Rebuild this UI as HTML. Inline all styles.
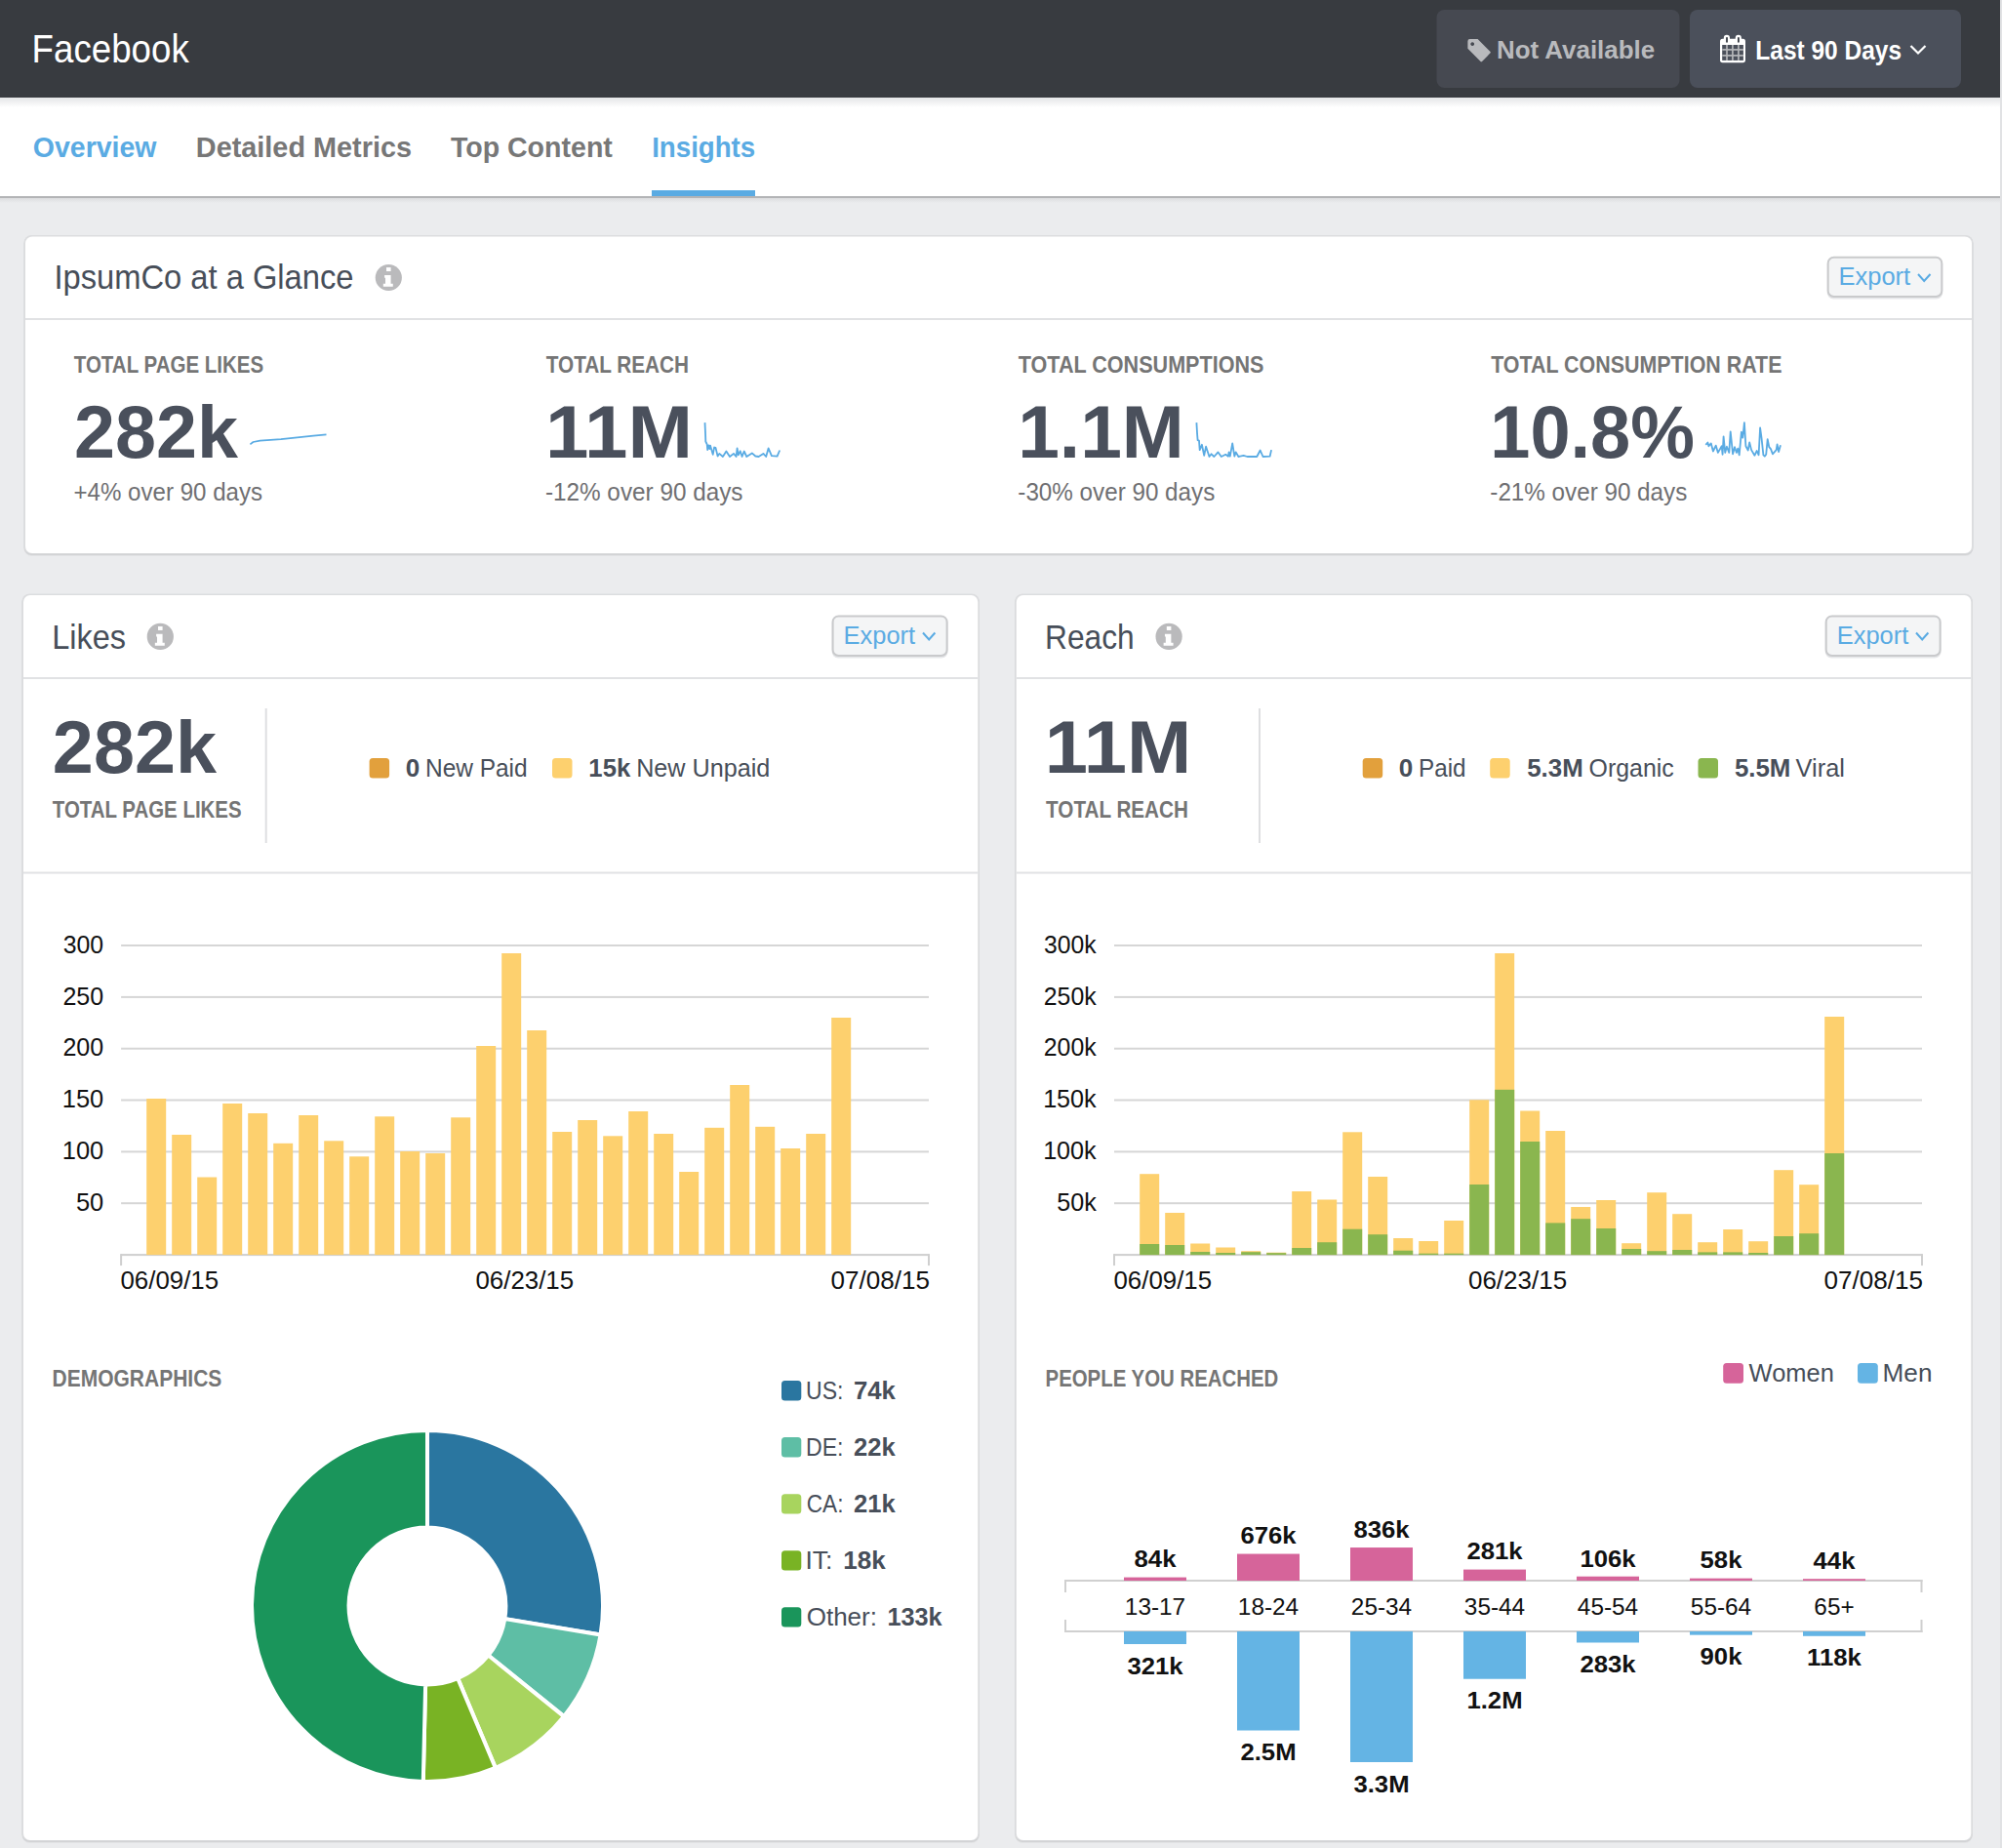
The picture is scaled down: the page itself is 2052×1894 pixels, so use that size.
<!DOCTYPE html>
<html><head><meta charset="utf-8"><title>Facebook Insights</title>
<style>
html,body{margin:0;padding:0;background:#ebecee;}
body{width:2052px;height:1894px;overflow:hidden;position:relative;font-family:"Liberation Sans",sans-serif;}
svg{position:absolute;left:0;top:0;}
text{font-family:"Liberation Sans",sans-serif;}
</style></head><body>
<svg width="2052" height="1894" viewBox="0 0 2052 1894">
<defs>
<linearGradient id="hdrshadow" x1="0" y1="0" x2="0" y2="1"><stop offset="0" stop-color="#e4e5e7"/><stop offset="1" stop-color="#ffffff"/></linearGradient>
<linearGradient id="tabshadow" x1="0" y1="0" x2="0" y2="1"><stop offset="0" stop-color="#dcdddf"/><stop offset="1" stop-color="#ebecee"/></linearGradient>
</defs>
<rect x="0" y="0" width="2050" height="100" fill="#383b40"/>
<rect x="2050" y="0" width="2" height="1894" fill="#e1e2e4"/>
<rect x="0" y="100" width="2050" height="101" fill="#ffffff"/>
<rect x="0" y="100" width="2050" height="10" fill="url(#hdrshadow)"/>
<rect x="0" y="201" width="2050" height="2" fill="#b3b4b6"/>
<rect x="0" y="203" width="2050" height="5" fill="url(#tabshadow)"/>
<rect x="668" y="195" width="106" height="6" fill="#5aabe3"/>
<rect x="1472.5" y="10" width="249" height="80" rx="8" fill="#464951"/>
<rect x="1732" y="10" width="278" height="80" rx="8" fill="#4b505b"/>
<rect x="24.5" y="242.5" width="1998.0" height="327.5" rx="8" fill="#e2e3e5"/>
<rect x="24.5" y="241.5" width="1998.0" height="327.5" rx="8" fill="#d2d3d5"/>
<rect x="24.5" y="241.0" width="1998.0" height="326.5" rx="8" fill="#dcdddf"/>
<rect x="26.0" y="242.5" width="1995.0" height="324.5" rx="7" fill="#ffffff"/>
<rect x="26" y="326" width="1995" height="2" fill="#e1e2e4"/>
<rect x="22.5" y="610.0" width="981.3" height="1279.0" rx="8" fill="#e2e3e5"/>
<rect x="22.5" y="609.0" width="981.3" height="1279.0" rx="8" fill="#d2d3d5"/>
<rect x="22.5" y="608.5" width="981.3" height="1278.0" rx="8" fill="#dcdddf"/>
<rect x="24.0" y="610.0" width="978.3" height="1276.0" rx="7" fill="#ffffff"/>
<rect x="1040.3" y="610.0" width="981.5" height="1279.0" rx="8" fill="#e2e3e5"/>
<rect x="1040.3" y="609.0" width="981.5" height="1279.0" rx="8" fill="#d2d3d5"/>
<rect x="1040.3" y="608.5" width="981.5" height="1278.0" rx="8" fill="#dcdddf"/>
<rect x="1041.8" y="610.0" width="978.5" height="1276.0" rx="7" fill="#ffffff"/>
<rect x="24.0" y="694" width="978.3" height="2" fill="#e1e2e4"/>
<rect x="24.0" y="893.5" width="978.3" height="2" fill="#e1e2e4"/>
<rect x="1042.0" y="694" width="978.3" height="2" fill="#e1e2e4"/>
<rect x="1042.0" y="893.5" width="978.3" height="2" fill="#e1e2e4"/>
<rect x="271.7" y="726" width="2" height="138" fill="#dedfe1"/>
<rect x="1290" y="726" width="2" height="138" fill="#dedfe1"/>
<rect x="1872.7" y="264.2" width="118.6" height="42.3" rx="6.5" fill="#e6e7e9"/>
<rect x="1873.7" y="263.7" width="116.6" height="40.3" rx="6" fill="#f4f5f6" stroke="#c9cacc" stroke-width="2"/>
<polyline points="1966.0,281.0 1972.2,288.0 1978.5,281.0" fill="none" stroke="#5aabe3" stroke-width="2"/>
<rect x="852.6" y="631.9" width="119.0" height="42.6" rx="6.5" fill="#e6e7e9"/>
<rect x="853.6" y="631.4" width="117.0" height="40.6" rx="6" fill="#f4f5f6" stroke="#c9cacc" stroke-width="2"/>
<polyline points="946.0,648.5 952.2,655.5 958.4,648.5" fill="none" stroke="#5aabe3" stroke-width="2"/>
<rect x="1870.7" y="631.9" width="118.9" height="42.6" rx="6.5" fill="#e6e7e9"/>
<rect x="1871.7" y="631.4" width="116.9" height="40.6" rx="6" fill="#f4f5f6" stroke="#c9cacc" stroke-width="2"/>
<polyline points="1964.0,648.5 1970.2,655.5 1976.4,648.5" fill="none" stroke="#5aabe3" stroke-width="2"/>
<circle cx="398.3" cy="284.5" r="13.6" fill="#bababc"/>
<rect x="396.02" y="274.08" width="4.57" height="3.97" fill="#fff"/>
<path d="M394.13 281.92 h6.45 v8.93 h2.18 v2.98 h-9.93 v-2.98 h2.18 v-6.15 h-0.89 z" fill="#fff"/>
<circle cx="164.3" cy="652.4" r="13.6" fill="#bababc"/>
<rect x="162.02" y="641.98" width="4.57" height="3.97" fill="#fff"/>
<path d="M160.13 649.82 h6.45 v8.93 h2.18 v2.98 h-9.93 v-2.98 h2.18 v-6.15 h-0.89 z" fill="#fff"/>
<circle cx="1198.1" cy="652.4" r="13.6" fill="#bababc"/>
<rect x="1195.82" y="641.98" width="4.57" height="3.97" fill="#fff"/>
<path d="M1193.93 649.82 h6.45 v8.93 h2.18 v2.98 h-9.93 v-2.98 h2.18 v-6.15 h-0.89 z" fill="#fff"/>
<polyline points="256.4,455.4 259.5,453.0 266.6,451.6 288.0,450.2 307.0,448.1 321.2,446.6 334.5,445.4" fill="none" stroke="#5aabe3" stroke-width="1.7" stroke-linejoin="round"/>
<polyline points="722.5,433.1 723.1,446.4 723.3,452.5 724.7,455.4 725.2,461.1 726.4,456.3 727.3,460.1 728.0,456.6 730.7,465.8 732.1,458.5 733.5,458.9 735.6,467.5 737.3,464.9 740.9,468.0 744.4,462.5 748.0,468.0 752.0,464.9 754.6,468.0 755.6,459.4 756.8,466.3 758.7,462.3 760.6,468.0 762.7,462.5 765.3,468.0 770.8,464.4 774.3,467.5 777.6,468.0 782.4,464.9 785.2,468.0 787.6,459.4 790.9,467.2 796.6,467.7 799.2,461.5" fill="none" stroke="#5aabe3" stroke-width="1.8" stroke-linejoin="round"/>
<polyline points="1226.4,433.1 1227.1,444.9 1227.6,451.1 1229.0,451.6 1229.7,461.1 1231.9,455.8 1234.2,466.8 1236.1,457.7 1239.5,468.0 1241.6,465.3 1244.4,468.0 1248.5,463.4 1251.8,468.0 1256.3,465.8 1258.9,467.7 1259.6,463.4 1260.8,467.7 1263.2,454.4 1265.3,467.7 1266.7,463.4 1269.4,468.0 1274.6,466.8 1278.4,468.0 1288.3,468.0 1291.7,461.5 1294.5,468.0 1301.6,467.7 1303.1,461.1" fill="none" stroke="#5aabe3" stroke-width="1.8" stroke-linejoin="round"/>
<polyline points="1748.3,455.8 1750.4,453.5 1751.4,457.3 1753.8,454.4 1755.9,462.5 1758.7,456.6 1760.9,463.9 1764.7,457.3 1765.6,465.8 1766.6,447.3 1768.2,463.9 1769.9,457.7 1772.3,463.9 1773.7,442.3 1776.1,465.3 1778.0,458.2 1779.9,463.9 1781.3,459.6 1782.7,466.3 1784.9,442.6 1786.3,448.7 1787.9,433.1 1789.4,457.3 1791.7,461.5 1793.2,453.5 1795.1,461.1 1798.4,466.8 1800.7,462.0 1802.6,466.3 1804.1,438.3 1805.5,448.7 1807.4,466.3 1808.8,467.7 1810.2,465.8 1811.7,450.2 1813.3,458.2 1815.0,460.1 1816.9,465.3 1820.7,461.1 1821.6,455.4 1823.1,463.0 1825.0,456.3" fill="none" stroke="#5aabe3" stroke-width="1.8" stroke-linejoin="round"/>
<rect x="124.1" y="968.0" width="827.9" height="2" fill="#d6d6d6"/>
<rect x="124.1" y="1020.9" width="827.9" height="2" fill="#d6d6d6"/>
<rect x="124.1" y="1073.7" width="827.9" height="2" fill="#d6d6d6"/>
<rect x="124.1" y="1126.5" width="827.9" height="2" fill="#d6d6d6"/>
<rect x="124.1" y="1179.4" width="827.9" height="2" fill="#d6d6d6"/>
<rect x="124.1" y="1232.2" width="827.9" height="2" fill="#d6d6d6"/>
<rect x="124.1" y="1285.1" width="827.9" height="2" fill="#cfcfcf"/>
<rect x="123.1" y="1285.1" width="2" height="12" fill="#cfcfcf"/>
<rect x="951.0" y="1285.1" width="2" height="12" fill="#cfcfcf"/>
<rect x="1142.0" y="968.0" width="828.0" height="2" fill="#d6d6d6"/>
<rect x="1142.0" y="1020.9" width="828.0" height="2" fill="#d6d6d6"/>
<rect x="1142.0" y="1073.7" width="828.0" height="2" fill="#d6d6d6"/>
<rect x="1142.0" y="1126.5" width="828.0" height="2" fill="#d6d6d6"/>
<rect x="1142.0" y="1179.4" width="828.0" height="2" fill="#d6d6d6"/>
<rect x="1142.0" y="1232.2" width="828.0" height="2" fill="#d6d6d6"/>
<rect x="1142.0" y="1285.1" width="828.0" height="2" fill="#cfcfcf"/>
<rect x="1141.0" y="1285.1" width="2" height="12" fill="#cfcfcf"/>
<rect x="1969.0" y="1285.1" width="2" height="12" fill="#cfcfcf"/>
<rect x="150.2" y="1126.0" width="20" height="160.1" fill="#fdd06e"/>
<rect x="176.2" y="1163.0" width="20" height="123.1" fill="#fdd06e"/>
<rect x="202.2" y="1206.5" width="20" height="79.6" fill="#fdd06e"/>
<rect x="228.2" y="1131.0" width="20" height="155.1" fill="#fdd06e"/>
<rect x="254.2" y="1141.0" width="20" height="145.1" fill="#fdd06e"/>
<rect x="280.2" y="1171.8" width="20" height="114.3" fill="#fdd06e"/>
<rect x="306.2" y="1143.0" width="20" height="143.1" fill="#fdd06e"/>
<rect x="332.2" y="1169.3" width="20" height="116.8" fill="#fdd06e"/>
<rect x="358.2" y="1185.3" width="20" height="100.8" fill="#fdd06e"/>
<rect x="384.2" y="1144.3" width="20" height="141.8" fill="#fdd06e"/>
<rect x="410.2" y="1180.0" width="20" height="106.1" fill="#fdd06e"/>
<rect x="436.2" y="1182.0" width="20" height="104.1" fill="#fdd06e"/>
<rect x="462.2" y="1145.3" width="20" height="140.8" fill="#fdd06e"/>
<rect x="488.2" y="1072.0" width="20" height="214.1" fill="#fdd06e"/>
<rect x="514.2" y="977.0" width="20" height="309.1" fill="#fdd06e"/>
<rect x="540.2" y="1056.0" width="20" height="230.1" fill="#fdd06e"/>
<rect x="566.2" y="1160.0" width="20" height="126.1" fill="#fdd06e"/>
<rect x="592.2" y="1148.0" width="20" height="138.1" fill="#fdd06e"/>
<rect x="618.2" y="1164.3" width="20" height="121.8" fill="#fdd06e"/>
<rect x="644.2" y="1139.0" width="20" height="147.1" fill="#fdd06e"/>
<rect x="670.2" y="1162.0" width="20" height="124.1" fill="#fdd06e"/>
<rect x="696.2" y="1201.0" width="20" height="85.1" fill="#fdd06e"/>
<rect x="722.2" y="1155.8" width="20" height="130.3" fill="#fdd06e"/>
<rect x="748.2" y="1112.0" width="20" height="174.1" fill="#fdd06e"/>
<rect x="774.2" y="1154.8" width="20" height="131.3" fill="#fdd06e"/>
<rect x="800.2" y="1177.0" width="20" height="109.1" fill="#fdd06e"/>
<rect x="826.2" y="1162.0" width="20" height="124.1" fill="#fdd06e"/>
<rect x="852.2" y="1043.0" width="20" height="243.1" fill="#fdd06e"/>
<rect x="1168.2" y="1203.2" width="20" height="82.9" fill="#fdd06e"/>
<rect x="1168.2" y="1275.0" width="20" height="11.1" fill="#8ab64f"/>
<rect x="1194.2" y="1243.0" width="20" height="43.1" fill="#fdd06e"/>
<rect x="1194.2" y="1276.0" width="20" height="10.1" fill="#8ab64f"/>
<rect x="1220.2" y="1274.5" width="20" height="11.6" fill="#fdd06e"/>
<rect x="1220.2" y="1283.0" width="20" height="3.1" fill="#8ab64f"/>
<rect x="1246.2" y="1278.5" width="20" height="7.6" fill="#fdd06e"/>
<rect x="1246.2" y="1284.0" width="20" height="2.1" fill="#8ab64f"/>
<rect x="1272.2" y="1282.2" width="20" height="3.9" fill="#fdd06e"/>
<rect x="1272.2" y="1283.2" width="20" height="2.9" fill="#8ab64f"/>
<rect x="1298.2" y="1283.7" width="20" height="2.4" fill="#fdd06e"/>
<rect x="1298.2" y="1284.2" width="20" height="1.9" fill="#8ab64f"/>
<rect x="1324.2" y="1221.0" width="20" height="65.1" fill="#fdd06e"/>
<rect x="1324.2" y="1279.0" width="20" height="7.1" fill="#8ab64f"/>
<rect x="1350.2" y="1229.5" width="20" height="56.6" fill="#fdd06e"/>
<rect x="1350.2" y="1273.2" width="20" height="12.9" fill="#8ab64f"/>
<rect x="1376.2" y="1160.3" width="20" height="125.8" fill="#fdd06e"/>
<rect x="1376.2" y="1259.7" width="20" height="26.4" fill="#8ab64f"/>
<rect x="1402.2" y="1206.0" width="20" height="80.1" fill="#fdd06e"/>
<rect x="1402.2" y="1265.2" width="20" height="20.9" fill="#8ab64f"/>
<rect x="1428.2" y="1269.0" width="20" height="17.1" fill="#fdd06e"/>
<rect x="1428.2" y="1281.7" width="20" height="4.4" fill="#8ab64f"/>
<rect x="1454.2" y="1272.0" width="20" height="14.1" fill="#fdd06e"/>
<rect x="1454.2" y="1284.7" width="20" height="1.4" fill="#8ab64f"/>
<rect x="1480.2" y="1251.0" width="20" height="35.1" fill="#fdd06e"/>
<rect x="1480.2" y="1284.7" width="20" height="1.4" fill="#8ab64f"/>
<rect x="1506.2" y="1127.3" width="20" height="158.8" fill="#fdd06e"/>
<rect x="1506.2" y="1214.0" width="20" height="72.1" fill="#8ab64f"/>
<rect x="1532.2" y="977.0" width="20" height="309.1" fill="#fdd06e"/>
<rect x="1532.2" y="1116.8" width="20" height="169.3" fill="#8ab64f"/>
<rect x="1558.2" y="1138.5" width="20" height="147.6" fill="#fdd06e"/>
<rect x="1558.2" y="1170.0" width="20" height="116.1" fill="#8ab64f"/>
<rect x="1584.2" y="1159.0" width="20" height="127.1" fill="#fdd06e"/>
<rect x="1584.2" y="1253.4" width="20" height="32.7" fill="#8ab64f"/>
<rect x="1610.2" y="1237.0" width="20" height="49.1" fill="#fdd06e"/>
<rect x="1610.2" y="1249.2" width="20" height="36.9" fill="#8ab64f"/>
<rect x="1636.2" y="1230.0" width="20" height="56.1" fill="#fdd06e"/>
<rect x="1636.2" y="1259.0" width="20" height="27.1" fill="#8ab64f"/>
<rect x="1662.2" y="1274.2" width="20" height="11.9" fill="#fdd06e"/>
<rect x="1662.2" y="1280.0" width="20" height="6.1" fill="#8ab64f"/>
<rect x="1688.2" y="1222.2" width="20" height="63.9" fill="#fdd06e"/>
<rect x="1688.2" y="1282.2" width="20" height="3.9" fill="#8ab64f"/>
<rect x="1714.2" y="1244.2" width="20" height="41.9" fill="#fdd06e"/>
<rect x="1714.2" y="1281.0" width="20" height="5.1" fill="#8ab64f"/>
<rect x="1740.2" y="1273.2" width="20" height="12.9" fill="#fdd06e"/>
<rect x="1740.2" y="1283.4" width="20" height="2.7" fill="#8ab64f"/>
<rect x="1766.2" y="1260.0" width="20" height="26.1" fill="#fdd06e"/>
<rect x="1766.2" y="1283.4" width="20" height="2.7" fill="#8ab64f"/>
<rect x="1792.2" y="1272.2" width="20" height="13.9" fill="#fdd06e"/>
<rect x="1792.2" y="1284.0" width="20" height="2.1" fill="#8ab64f"/>
<rect x="1818.2" y="1199.2" width="20" height="86.9" fill="#fdd06e"/>
<rect x="1818.2" y="1267.0" width="20" height="19.1" fill="#8ab64f"/>
<rect x="1844.2" y="1214.2" width="20" height="71.9" fill="#fdd06e"/>
<rect x="1844.2" y="1264.2" width="20" height="21.9" fill="#8ab64f"/>
<rect x="1870.2" y="1042.0" width="20" height="244.1" fill="#fdd06e"/>
<rect x="1870.2" y="1182.0" width="20" height="104.1" fill="#8ab64f"/>
<rect x="378.6" y="777.0" width="20.5" height="20.5" rx="3.5" fill="#e2a03c"/>
<rect x="566.0" y="777.0" width="20.5" height="20.5" rx="3.5" fill="#fdd06e"/>
<rect x="1396.7" y="777.0" width="20.5" height="20.5" rx="3.5" fill="#e2a03c"/>
<rect x="1527.2" y="777.0" width="20.5" height="20.5" rx="3.5" fill="#fdd06e"/>
<rect x="1740.5" y="777.0" width="20.5" height="20.5" rx="3.5" fill="#8ab64f"/>
<rect x="801.0" y="1415.1" width="20.3" height="20.3" rx="3.5" fill="#2a76a0"/>
<rect x="801.0" y="1473.1" width="20.3" height="20.3" rx="3.5" fill="#5ebea5"/>
<rect x="801.0" y="1531.2" width="20.3" height="20.3" rx="3.5" fill="#a8d45e"/>
<rect x="801.0" y="1589.2" width="20.3" height="20.3" rx="3.5" fill="#79b324"/>
<rect x="801.0" y="1647.3" width="20.3" height="20.3" rx="3.5" fill="#1a955b"/>
<path d="M438.00 1466.00 A180.0 180.0 0 0 1 615.58 1675.41 L517.32 1659.14 A80.4 80.4 0 0 0 438.00 1565.60 Z" fill="#2a76a0" stroke="#fff" stroke-width="4" stroke-linejoin="miter"/>
<path d="M615.58 1675.41 A180.0 180.0 0 0 1 577.97 1759.17 L500.52 1696.55 A80.4 80.4 0 0 0 517.32 1659.14 Z" fill="#5ebea5" stroke="#fff" stroke-width="4" stroke-linejoin="miter"/>
<path d="M577.97 1759.17 A180.0 180.0 0 0 1 507.86 1811.89 L469.20 1720.10 A80.4 80.4 0 0 0 500.52 1696.55 Z" fill="#a8d45e" stroke="#fff" stroke-width="4" stroke-linejoin="miter"/>
<path d="M507.86 1811.89 A180.0 180.0 0 0 1 433.78 1825.95 L436.12 1726.38 A80.4 80.4 0 0 0 469.20 1720.10 Z" fill="#79b324" stroke="#fff" stroke-width="4" stroke-linejoin="miter"/>
<path d="M433.78 1825.95 A180.0 180.0 0 0 1 438.00 1466.00 L438.00 1565.60 A80.4 80.4 0 0 0 436.12 1726.38 Z" fill="#1a955b" stroke="#fff" stroke-width="4" stroke-linejoin="miter"/>
<rect x="1766.2" y="1397.0" width="20.8" height="20.8" rx="3.5" fill="#d6649a"/>
<rect x="1904.0" y="1397.0" width="20.8" height="20.8" rx="3.5" fill="#64b4e4"/>
<rect x="1091" y="1619" width="879.5" height="2" fill="#d0d0d0"/>
<rect x="1091" y="1671" width="879.5" height="2" fill="#d0d0d0"/>
<rect x="1091.0" y="1619" width="2" height="13" fill="#d0d0d0"/>
<rect x="1091.0" y="1660" width="2" height="13" fill="#d0d0d0"/>
<rect x="1968.5" y="1619" width="2" height="13" fill="#d0d0d0"/>
<rect x="1968.5" y="1660" width="2" height="13" fill="#d0d0d0"/>
<rect x="1152.0" y="1616.59" width="64" height="3.41" fill="#d6649a"/>
<rect x="1152.0" y="1672" width="64" height="13.03" fill="#64b4e4"/>
<rect x="1268.0" y="1592.55" width="64" height="27.45" fill="#d6649a"/>
<rect x="1268.0" y="1672" width="64" height="101.52" fill="#64b4e4"/>
<rect x="1384.0" y="1586.05" width="64" height="33.95" fill="#d6649a"/>
<rect x="1384.0" y="1672" width="64" height="134.00" fill="#64b4e4"/>
<rect x="1500.0" y="1608.59" width="64" height="11.41" fill="#d6649a"/>
<rect x="1500.0" y="1672" width="64" height="48.73" fill="#64b4e4"/>
<rect x="1616.0" y="1615.70" width="64" height="4.30" fill="#d6649a"/>
<rect x="1616.0" y="1672" width="64" height="11.49" fill="#64b4e4"/>
<rect x="1732.0" y="1617.64" width="64" height="2.36" fill="#d6649a"/>
<rect x="1732.0" y="1672" width="64" height="3.65" fill="#64b4e4"/>
<rect x="1848.0" y="1618.20" width="64" height="1.80" fill="#d6649a"/>
<rect x="1848.0" y="1672" width="64" height="4.79" fill="#64b4e4"/>
<path d="M1506.6 40 H1514.6 L1527.3 52.7 Q1528.3 53.6 1527.3 54.6 L1519.3 62.7 Q1518.3 63.7 1517.3 62.7 L1504.4 49.7 V42.2 Q1504.4 40 1506.6 40 Z M1509.2 43.2 a1.9 1.9 0 1 0 0.01 0 z" fill="#b9babd" fill-rule="evenodd"/>
<rect x="1763" y="39.8" width="26" height="24.4" rx="2.6" fill="#ffffff"/>
<rect x="1765.2" y="46" width="21.7" height="15.9" fill="#4b505b"/>
<g fill="#b5b6b9"><rect x="1769.15" y="46" width="1.7" height="15.9"/><rect x="1775.05" y="46" width="1.7" height="15.9"/><rect x="1781.05" y="46" width="1.7" height="15.9"/><rect x="1765.2" y="50.05" width="21.7" height="1.7"/><rect x="1765.2" y="56.05" width="21.7" height="1.7"/></g>
<g fill="#ffffff"><rect x="1766.8" y="35.8" width="6.2" height="8" rx="3.1"/><rect x="1778.7" y="35.8" width="6.2" height="8" rx="3.1"/></g>
<g fill="#343840"><rect x="1769.1" y="37.9" width="1.8" height="5.8" rx="0.9"/><rect x="1781" y="37.9" width="1.8" height="5.8" rx="0.9"/></g>
<polyline points="1958.5,47 1966,54.5 1973.5,47" fill="none" stroke="#fff" stroke-width="2.2"/>
<text x="32.59" y="64.40" font-size="39.83" font-weight="normal" fill="#ffffff" textLength="161.16" lengthAdjust="spacingAndGlyphs">Facebook</text>
<text x="1533.98" y="60.00" font-size="26.02" font-weight="bold" fill="#b9babd" textLength="162.20" lengthAdjust="spacingAndGlyphs">Not Available</text>
<text x="1799.36" y="60.50" font-size="26.89" font-weight="bold" fill="#ffffff" textLength="149.64" lengthAdjust="spacingAndGlyphs">Last 90 Days</text>
<text x="33.83" y="160.80" font-size="29.65" font-weight="bold" fill="#5aabe3" textLength="126.71" lengthAdjust="spacingAndGlyphs">Overview</text>
<text x="200.87" y="160.80" font-size="29.36" font-weight="bold" fill="#777777" textLength="221.11" lengthAdjust="spacingAndGlyphs">Detailed Metrics</text>
<text x="461.88" y="161.00" font-size="29.65" font-weight="bold" fill="#777777" textLength="165.97" lengthAdjust="spacingAndGlyphs">Top Content</text>
<text x="668.15" y="161.00" font-size="29.94" font-weight="bold" fill="#5aabe3" textLength="106.09" lengthAdjust="spacingAndGlyphs">Insights</text>
<text x="55.48" y="296.00" font-size="34.45" font-weight="normal" fill="#474e59" textLength="306.97" lengthAdjust="spacingAndGlyphs">IpsumCo at a Glance</text>
<text x="1884.51" y="292.00" font-size="26.16" font-weight="normal" fill="#5aabe3" textLength="73.68" lengthAdjust="spacingAndGlyphs">Export</text>
<text x="75.77" y="382.40" font-size="23.84" font-weight="bold" fill="#757575" textLength="194.43" lengthAdjust="spacingAndGlyphs">TOTAL PAGE LIKES</text>
<text x="559.77" y="382.40" font-size="23.84" font-weight="bold" fill="#757575" textLength="146.23" lengthAdjust="spacingAndGlyphs">TOTAL REACH</text>
<text x="1043.76" y="382.40" font-size="23.84" font-weight="bold" fill="#757575" textLength="251.68" lengthAdjust="spacingAndGlyphs">TOTAL CONSUMPTIONS</text>
<text x="1528.16" y="382.40" font-size="23.84" font-weight="bold" fill="#757575" textLength="298.28" lengthAdjust="spacingAndGlyphs">TOTAL CONSUMPTION RATE</text>
<text x="76.08" y="469.00" font-size="76.02" font-weight="bold" fill="#4a505c" textLength="167.84" lengthAdjust="spacingAndGlyphs">282k</text>
<text x="558.97" y="469.00" font-size="76.02" font-weight="bold" fill="#4a505c" textLength="150.97" lengthAdjust="spacingAndGlyphs">11M</text>
<text x="1043.17" y="469.00" font-size="76.02" font-weight="bold" fill="#4a505c" textLength="170.56" lengthAdjust="spacingAndGlyphs">1.1M</text>
<text x="1527.34" y="469.00" font-size="76.02" font-weight="bold" fill="#4a505c" textLength="209.61" lengthAdjust="spacingAndGlyphs">10.8%</text>
<text x="75.52" y="513.00" font-size="26.16" font-weight="normal" fill="#6f6f72" textLength="193.55" lengthAdjust="spacingAndGlyphs">+4% over 90 days</text>
<text x="558.92" y="513.00" font-size="26.16" font-weight="normal" fill="#6f6f72" textLength="202.56" lengthAdjust="spacingAndGlyphs">-12% over 90 days</text>
<text x="1043.32" y="513.00" font-size="26.16" font-weight="normal" fill="#6f6f72" textLength="201.95" lengthAdjust="spacingAndGlyphs">-30% over 90 days</text>
<text x="1527.32" y="513.00" font-size="26.16" font-weight="normal" fill="#6f6f72" textLength="201.95" lengthAdjust="spacingAndGlyphs">-21% over 90 days</text>
<text x="53.14" y="664.50" font-size="34.74" font-weight="normal" fill="#474e59" textLength="75.84" lengthAdjust="spacingAndGlyphs">Likes</text>
<text x="864.61" y="659.90" font-size="25.73" font-weight="normal" fill="#5aabe3" textLength="73.57" lengthAdjust="spacingAndGlyphs">Export</text>
<text x="53.88" y="792.00" font-size="75.44" font-weight="bold" fill="#4a505c" textLength="168.05" lengthAdjust="spacingAndGlyphs">282k</text>
<text x="53.77" y="838.00" font-size="23.55" font-weight="bold" fill="#757575" textLength="193.83" lengthAdjust="spacingAndGlyphs">TOTAL PAGE LIKES</text>
<text x="1071.00" y="664.50" font-size="34.74" font-weight="normal" fill="#474e59" textLength="91.66" lengthAdjust="spacingAndGlyphs">Reach</text>
<text x="1882.71" y="659.90" font-size="25.73" font-weight="normal" fill="#5aabe3" textLength="73.57" lengthAdjust="spacingAndGlyphs">Export</text>
<text x="1070.89" y="792.00" font-size="75.44" font-weight="bold" fill="#4a505c" textLength="150.33" lengthAdjust="spacingAndGlyphs">11M</text>
<text x="1072.07" y="838.00" font-size="23.55" font-weight="bold" fill="#757575" textLength="145.82" lengthAdjust="spacingAndGlyphs">TOTAL REACH</text>
<text x="64.75" y="976.70" font-size="26.02" font-weight="normal" fill="#111111" textLength="41.42" lengthAdjust="spacingAndGlyphs">300</text>
<text x="1070.11" y="976.70" font-size="26.02" font-weight="normal" fill="#111111" textLength="53.61" lengthAdjust="spacingAndGlyphs">300k</text>
<text x="64.44" y="1029.55" font-size="26.02" font-weight="normal" fill="#111111" textLength="41.74" lengthAdjust="spacingAndGlyphs">250</text>
<text x="1069.80" y="1029.55" font-size="26.02" font-weight="normal" fill="#111111" textLength="53.91" lengthAdjust="spacingAndGlyphs">250k</text>
<text x="64.44" y="1082.40" font-size="26.02" font-weight="normal" fill="#111111" textLength="41.74" lengthAdjust="spacingAndGlyphs">200</text>
<text x="1069.80" y="1082.40" font-size="26.02" font-weight="normal" fill="#111111" textLength="53.91" lengthAdjust="spacingAndGlyphs">200k</text>
<text x="63.76" y="1135.25" font-size="26.02" font-weight="normal" fill="#111111" textLength="42.43" lengthAdjust="spacingAndGlyphs">150</text>
<text x="1069.13" y="1135.25" font-size="26.02" font-weight="normal" fill="#111111" textLength="54.58" lengthAdjust="spacingAndGlyphs">150k</text>
<text x="63.76" y="1188.10" font-size="26.02" font-weight="normal" fill="#111111" textLength="42.43" lengthAdjust="spacingAndGlyphs">100</text>
<text x="1069.13" y="1188.10" font-size="26.02" font-weight="normal" fill="#111111" textLength="54.58" lengthAdjust="spacingAndGlyphs">100k</text>
<text x="77.88" y="1240.95" font-size="26.02" font-weight="normal" fill="#111111" textLength="28.31" lengthAdjust="spacingAndGlyphs">50</text>
<text x="1083.25" y="1240.95" font-size="26.02" font-weight="normal" fill="#111111" textLength="40.47" lengthAdjust="spacingAndGlyphs">50k</text>
<text x="123.49" y="1321.00" font-size="26.02" font-weight="normal" fill="#111111" textLength="100.59" lengthAdjust="spacingAndGlyphs">06/09/15</text>
<text x="487.49" y="1321.00" font-size="26.02" font-weight="normal" fill="#111111" textLength="100.59" lengthAdjust="spacingAndGlyphs">06/23/15</text>
<text x="851.48" y="1321.00" font-size="26.02" font-weight="normal" fill="#111111" textLength="101.41" lengthAdjust="spacingAndGlyphs">07/08/15</text>
<text x="1141.49" y="1321.00" font-size="26.02" font-weight="normal" fill="#111111" textLength="100.59" lengthAdjust="spacingAndGlyphs">06/09/15</text>
<text x="1504.99" y="1321.00" font-size="26.02" font-weight="normal" fill="#111111" textLength="101.11" lengthAdjust="spacingAndGlyphs">06/23/15</text>
<text x="1869.48" y="1321.00" font-size="26.02" font-weight="normal" fill="#111111" textLength="101.62" lengthAdjust="spacingAndGlyphs">07/08/15</text>
<text x="415.77" y="795.80" font-size="25.29" font-weight="bold" fill="#474e59" textLength="14.50" lengthAdjust="spacingAndGlyphs">0</text>
<text x="435.99" y="795.80" font-size="25.29" font-weight="normal" fill="#474e59" textLength="104.68" lengthAdjust="spacingAndGlyphs">New Paid</text>
<text x="603.38" y="795.80" font-size="25.29" font-weight="bold" fill="#474e59" textLength="42.79" lengthAdjust="spacingAndGlyphs">15k</text>
<text x="652.13" y="795.80" font-size="25.29" font-weight="normal" fill="#474e59" textLength="137.19" lengthAdjust="spacingAndGlyphs">New Unpaid</text>
<text x="1433.77" y="795.80" font-size="25.29" font-weight="bold" fill="#474e59" textLength="14.50" lengthAdjust="spacingAndGlyphs">0</text>
<text x="1454.01" y="795.80" font-size="25.29" font-weight="normal" fill="#474e59" textLength="48.55" lengthAdjust="spacingAndGlyphs">Paid</text>
<text x="1565.20" y="795.80" font-size="25.29" font-weight="bold" fill="#474e59" textLength="57.53" lengthAdjust="spacingAndGlyphs">5.3M</text>
<text x="1628.62" y="795.80" font-size="25.29" font-weight="normal" fill="#474e59" textLength="87.13" lengthAdjust="spacingAndGlyphs">Organic</text>
<text x="1777.90" y="795.80" font-size="25.29" font-weight="bold" fill="#474e59" textLength="57.53" lengthAdjust="spacingAndGlyphs">5.5M</text>
<text x="1840.59" y="795.80" font-size="25.29" font-weight="normal" fill="#474e59" textLength="50.31" lengthAdjust="spacingAndGlyphs">Viral</text>
<text x="53.60" y="1420.50" font-size="24.71" font-weight="bold" fill="#757575" textLength="173.72" lengthAdjust="spacingAndGlyphs">DEMOGRAPHICS</text>
<text x="1071.54" y="1420.60" font-size="24.71" font-weight="bold" fill="#757575" textLength="238.82" lengthAdjust="spacingAndGlyphs">PEOPLE YOU REACHED</text>
<text x="826.12" y="1434.00" font-size="26.16" font-weight="normal" fill="#474e59" textLength="38.38" lengthAdjust="spacingAndGlyphs">US:</text>
<text x="874.90" y="1434.00" font-size="26.16" font-weight="bold" fill="#474e59" textLength="42.88" lengthAdjust="spacingAndGlyphs">74k</text>
<text x="826.01" y="1492.05" font-size="26.16" font-weight="normal" fill="#474e59" textLength="38.50" lengthAdjust="spacingAndGlyphs">DE:</text>
<text x="875.11" y="1492.05" font-size="26.16" font-weight="bold" fill="#474e59" textLength="42.66" lengthAdjust="spacingAndGlyphs">22k</text>
<text x="826.75" y="1550.10" font-size="26.16" font-weight="normal" fill="#474e59" textLength="37.71" lengthAdjust="spacingAndGlyphs">CA:</text>
<text x="875.11" y="1550.10" font-size="26.16" font-weight="bold" fill="#474e59" textLength="42.66" lengthAdjust="spacingAndGlyphs">21k</text>
<text x="825.46" y="1608.15" font-size="26.16" font-weight="normal" fill="#474e59" textLength="27.96" lengthAdjust="spacingAndGlyphs">IT:</text>
<text x="864.36" y="1608.15" font-size="26.16" font-weight="bold" fill="#474e59" textLength="43.41" lengthAdjust="spacingAndGlyphs">18k</text>
<text x="826.67" y="1666.20" font-size="26.16" font-weight="normal" fill="#474e59" textLength="72.31" lengthAdjust="spacingAndGlyphs">Other:</text>
<text x="909.41" y="1666.20" font-size="26.16" font-weight="bold" fill="#474e59" textLength="56.17" lengthAdjust="spacingAndGlyphs">133k</text>
<text x="1792.59" y="1416.20" font-size="26.16" font-weight="normal" fill="#474e59" textLength="87.27" lengthAdjust="spacingAndGlyphs">Women</text>
<text x="1929.55" y="1416.20" font-size="26.16" font-weight="normal" fill="#474e59" textLength="50.95" lengthAdjust="spacingAndGlyphs">Men</text>
<text x="1152.87" y="1655.00" font-size="24.71" font-weight="normal" fill="#111111" textLength="62.25" lengthAdjust="spacingAndGlyphs">13-17</text>
<text x="1162.56" y="1606.39" font-size="24.71" font-weight="bold" fill="#111111" textLength="42.88" lengthAdjust="spacingAndGlyphs">84k</text>
<text x="1155.42" y="1715.53" font-size="24.71" font-weight="bold" fill="#111111" textLength="57.17" lengthAdjust="spacingAndGlyphs">321k</text>
<text x="1268.87" y="1655.00" font-size="24.71" font-weight="normal" fill="#111111" textLength="62.25" lengthAdjust="spacingAndGlyphs">18-24</text>
<text x="1271.42" y="1582.35" font-size="24.71" font-weight="bold" fill="#111111" textLength="57.17" lengthAdjust="spacingAndGlyphs">676k</text>
<text x="1271.43" y="1804.02" font-size="24.71" font-weight="bold" fill="#111111" textLength="57.13" lengthAdjust="spacingAndGlyphs">2.5M</text>
<text x="1384.87" y="1655.00" font-size="24.71" font-weight="normal" fill="#111111" textLength="62.25" lengthAdjust="spacingAndGlyphs">25-34</text>
<text x="1387.42" y="1575.85" font-size="24.71" font-weight="bold" fill="#111111" textLength="57.17" lengthAdjust="spacingAndGlyphs">836k</text>
<text x="1387.43" y="1836.50" font-size="24.71" font-weight="bold" fill="#111111" textLength="57.13" lengthAdjust="spacingAndGlyphs">3.3M</text>
<text x="1500.87" y="1655.00" font-size="24.71" font-weight="normal" fill="#111111" textLength="62.25" lengthAdjust="spacingAndGlyphs">35-44</text>
<text x="1503.42" y="1598.39" font-size="24.71" font-weight="bold" fill="#111111" textLength="57.17" lengthAdjust="spacingAndGlyphs">281k</text>
<text x="1503.43" y="1751.23" font-size="24.71" font-weight="bold" fill="#111111" textLength="57.13" lengthAdjust="spacingAndGlyphs">1.2M</text>
<text x="1616.87" y="1655.00" font-size="24.71" font-weight="normal" fill="#111111" textLength="62.25" lengthAdjust="spacingAndGlyphs">45-54</text>
<text x="1619.42" y="1605.50" font-size="24.71" font-weight="bold" fill="#111111" textLength="57.17" lengthAdjust="spacingAndGlyphs">106k</text>
<text x="1619.42" y="1713.99" font-size="24.71" font-weight="bold" fill="#111111" textLength="57.17" lengthAdjust="spacingAndGlyphs">283k</text>
<text x="1732.87" y="1655.00" font-size="24.71" font-weight="normal" fill="#111111" textLength="62.25" lengthAdjust="spacingAndGlyphs">55-64</text>
<text x="1742.56" y="1607.44" font-size="24.71" font-weight="bold" fill="#111111" textLength="42.88" lengthAdjust="spacingAndGlyphs">58k</text>
<text x="1742.56" y="1706.15" font-size="24.71" font-weight="bold" fill="#111111" textLength="42.88" lengthAdjust="spacingAndGlyphs">90k</text>
<text x="1859.36" y="1655.00" font-size="24.71" font-weight="normal" fill="#111111" textLength="41.29" lengthAdjust="spacingAndGlyphs">65+</text>
<text x="1858.56" y="1608.00" font-size="24.71" font-weight="bold" fill="#111111" textLength="42.88" lengthAdjust="spacingAndGlyphs">44k</text>
<text x="1852.12" y="1707.29" font-size="24.71" font-weight="bold" fill="#111111" textLength="55.75" lengthAdjust="spacingAndGlyphs">118k</text>
</svg>
</body></html>
